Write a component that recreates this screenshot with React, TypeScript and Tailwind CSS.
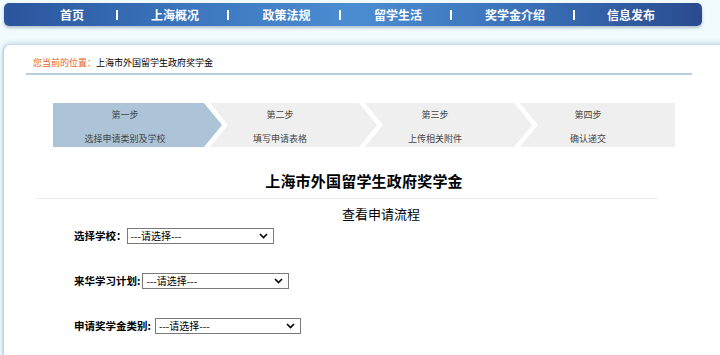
import React from "react";

const font = { fontFamily: '"Noto Sans CJK SC", "Noto Sans", sans-serif' };

function Chevron() {
  return (
    <svg width="9" height="6" viewBox="0 0 9 6" className="shrink-0">
      <path d="M1 1 L4.5 4.5 L8 1" fill="none" stroke="#000" strokeWidth="1.6" />
    </svg>
  );
}

function FakeSelect({ w }: { w: number }) {
  return (
    <div
      className="flex h-[16px] items-center justify-between border border-[#7a7a7a] bg-white pl-[3px] pr-[5px] text-[10px] leading-none text-black"
      style={{ width: w }}
    >
      <span className="font-normal">---请选择---</span>
      <Chevron />
    </div>
  );
}

export default function App() {
  const nav = [
    { t: "首页", w: 93 },
    { t: "上海概况", w: 109 },
    { t: "政策法规", w: 110 },
    { t: "留学生活", w: 109 },
    { t: "奖学金介绍", w: 121 },
    { t: "信息发布", w: 107 },
  ];
  return (
    <div
      className="relative h-[355px] w-[720px] overflow-hidden bg-[#f1fbfd]"
      style={font}
    >
      {/* Nav */}
      <div className="pl-[4px] pt-[3px]">
        <div className="flex h-[23px] w-[698px] items-center rounded-[5px] bg-[linear-gradient(to_right,#2b559c_0%,#3a74bd_25%,#4b8dd2_50%,#3a70b8_75%,#2a4b8e_100%)] pl-[19px] shadow-[0_2px_3px_rgba(60,90,120,0.35)]">
          {nav.map((n, i) => (
            <React.Fragment key={n.t}>
              <div
                className="pl-[5px] text-center text-[12px] font-bold leading-none text-white"
                style={{ width: n.w }}
              >
                {n.t}
              </div>
              {i < nav.length - 1 && <div className="h-[10px] w-[2px] bg-white" />}
            </React.Fragment>
          ))}
        </div>
      </div>

      {/* Panel */}
      <div className="ml-[2px] mt-[18px] h-[400px] w-[728px] rounded-tl-[8px] border-l-2 border-t border-[#c9d9e3] bg-white shadow-[0_-2px_4px_rgba(170,200,215,0.45)]">
        {/* breadcrumb */}
        <div className="ml-[22px] mt-[11px] w-[666px] border-b-2 border-[#b9cfdf] pb-[4px] pl-[7px] text-[9px] leading-[13px]">
          <span className="text-[#e2661c]">您当前的位置：</span>
          <span className="text-black">上海市外国留学生政府奖学金</span>
        </div>

        {/* steps */}
        <div className="ml-[49px] mt-[28px] flex h-[44px] text-[9px] leading-none text-[#444]">
          <div className="flex w-[169px] shrink-0 flex-col items-center bg-[#adc4d8] pr-[25px] pt-[7px] [clip-path:polygon(0_0,151px_0,100%_50%,151px_100%,0_100%)]">
            <div>第一步</div>
            <div className="mt-[15px]">选择申请类别及学校</div>
          </div>
          <div className="-ml-[12px] flex w-[167px] shrink-0 flex-col items-center bg-[#efefef] pr-[29px] pl-[2px] pt-[7px] [clip-path:polygon(0_0,149px_0,100%_50%,149px_100%,0_100%,18px_50%)]">
            <div>第二步</div>
            <div className="mt-[15px]">填写申请表格</div>
          </div>
          <div className="-ml-[12px] flex w-[167px] shrink-0 flex-col items-center bg-[#efefef] pr-[29px] pl-[2px] pt-[7px] [clip-path:polygon(0_0,149px_0,100%_50%,149px_100%,0_100%,18px_50%)]">
            <div>第三步</div>
            <div className="mt-[15px]">上传相关附件</div>
          </div>
          <div className="-ml-[12px] flex w-[155px] shrink-0 flex-col items-center bg-[#efefef] pr-[21px] pl-[2px] pt-[7px] [clip-path:polygon(0_0,100%_0,100%_100%,0_100%,18px_50%)]">
            <div>第四步</div>
            <div className="mt-[15px]">确认递交</div>
          </div>
        </div>

        {/* title */}
        <div className="mt-[24px] pr-[6px] text-center text-[15px] font-bold leading-[20px] tracking-[0.2px] text-black">
          上海市外国留学生政府奖学金
        </div>
        <div className="ml-[32px] mt-[7px] h-px w-[622px] bg-[#ececec]" />
        <div className="mt-[6px] pl-[28px] text-center text-[13px] leading-[18px] text-black">
          查看申请流程
        </div>

        {/* form */}
        <div className="ml-[70px] mt-[5px] flex flex-col gap-[29px] text-[10.5px] font-bold leading-none text-black">
          <div className="flex items-center gap-[0px]">
            <span>选择学校：</span>
            <FakeSelect w={147} />
          </div>
          <div className="flex items-center gap-[2px]">
            <span>来华学习计划:</span>
            <FakeSelect w={147} />
          </div>
          <div className="flex items-center gap-[4px]">
            <span>申请奖学金类别:</span>
            <FakeSelect w={146} />
          </div>
        </div>
      </div>
    </div>
  );
}
